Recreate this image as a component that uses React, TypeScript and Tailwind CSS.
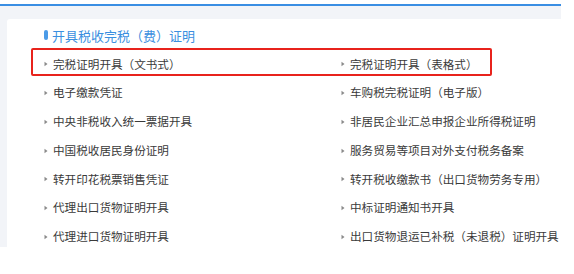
const items: [string, string][] = [
  ["完税证明开具（文书式）", "完税证明开具（表格式）"],
  ["电子缴款凭证", "车购税完税证明（电子版）"],
  ["中央非税收入统一票据开具", "非居民企业汇总申报企业所得税证明"],
  ["中国税收居民身份证明", "服务贸易等项目对外支付税务备案"],
  ["转开印花税票销售凭证", "转开税收缴款书（出口货物劳务专用）"],
  ["代理出口货物证明开具", "中标证明通知书开具"],
  ["代理进口货物证明开具", "出口货物退运已补税（未退税）证明开具"],
];

function Item({ label }: { label: string }) {
  return (
    <div className="flex items-center h-[28.75px]">
      <svg width="4" height="6" viewBox="0 0 4 6" className="mr-[5px] shrink-0">
        <path d="M0.5 0.8 L3.5 3 L0.5 5.2 Z" fill="#8a8a8a" />
      </svg>
      <span className="text-[11.6px] text-[#3a3a3a] whitespace-nowrap leading-none">{label}</span>
    </div>
  );
}

export default function App() {
  return (
    <div
      className="w-[574px] h-[274px] bg-white pt-[4px] overflow-hidden"
      style={{ fontFamily: '"Noto Sans CJK SC", "Noto Sans", sans-serif' }}
    >
      <div className="w-[561px] border-t-2 border-[#3a8ee3] bg-[#f2f4f8] pl-[7px] pt-[13px]">
        <div className="relative bg-white rounded-tl-[3px] h-[228px] pl-[37px] pt-[8px]">
          <div className="flex items-center h-[16px]">
            <span className="w-[4px] h-[10px] rounded-full bg-[#4b9be8] mr-[4px]" />
            <span className="text-[13px] text-[#3b8fe0] leading-none">开具税收完税（费）证明</span>
          </div>

          <div className="grid grid-cols-[297px_1fr] mt-[7px]">
            {items.map(([a, b]) => (
              <div key={a} className="contents">
                <Item label={a} />
                <Item label={b} />
              </div>
            ))}
          </div>

          <div className="absolute left-[24px] top-[29px] w-[461px] h-[28px] border-2 border-[#e8231c] rounded-[2px]" />
        </div>
      </div>
    </div>
  );
}
